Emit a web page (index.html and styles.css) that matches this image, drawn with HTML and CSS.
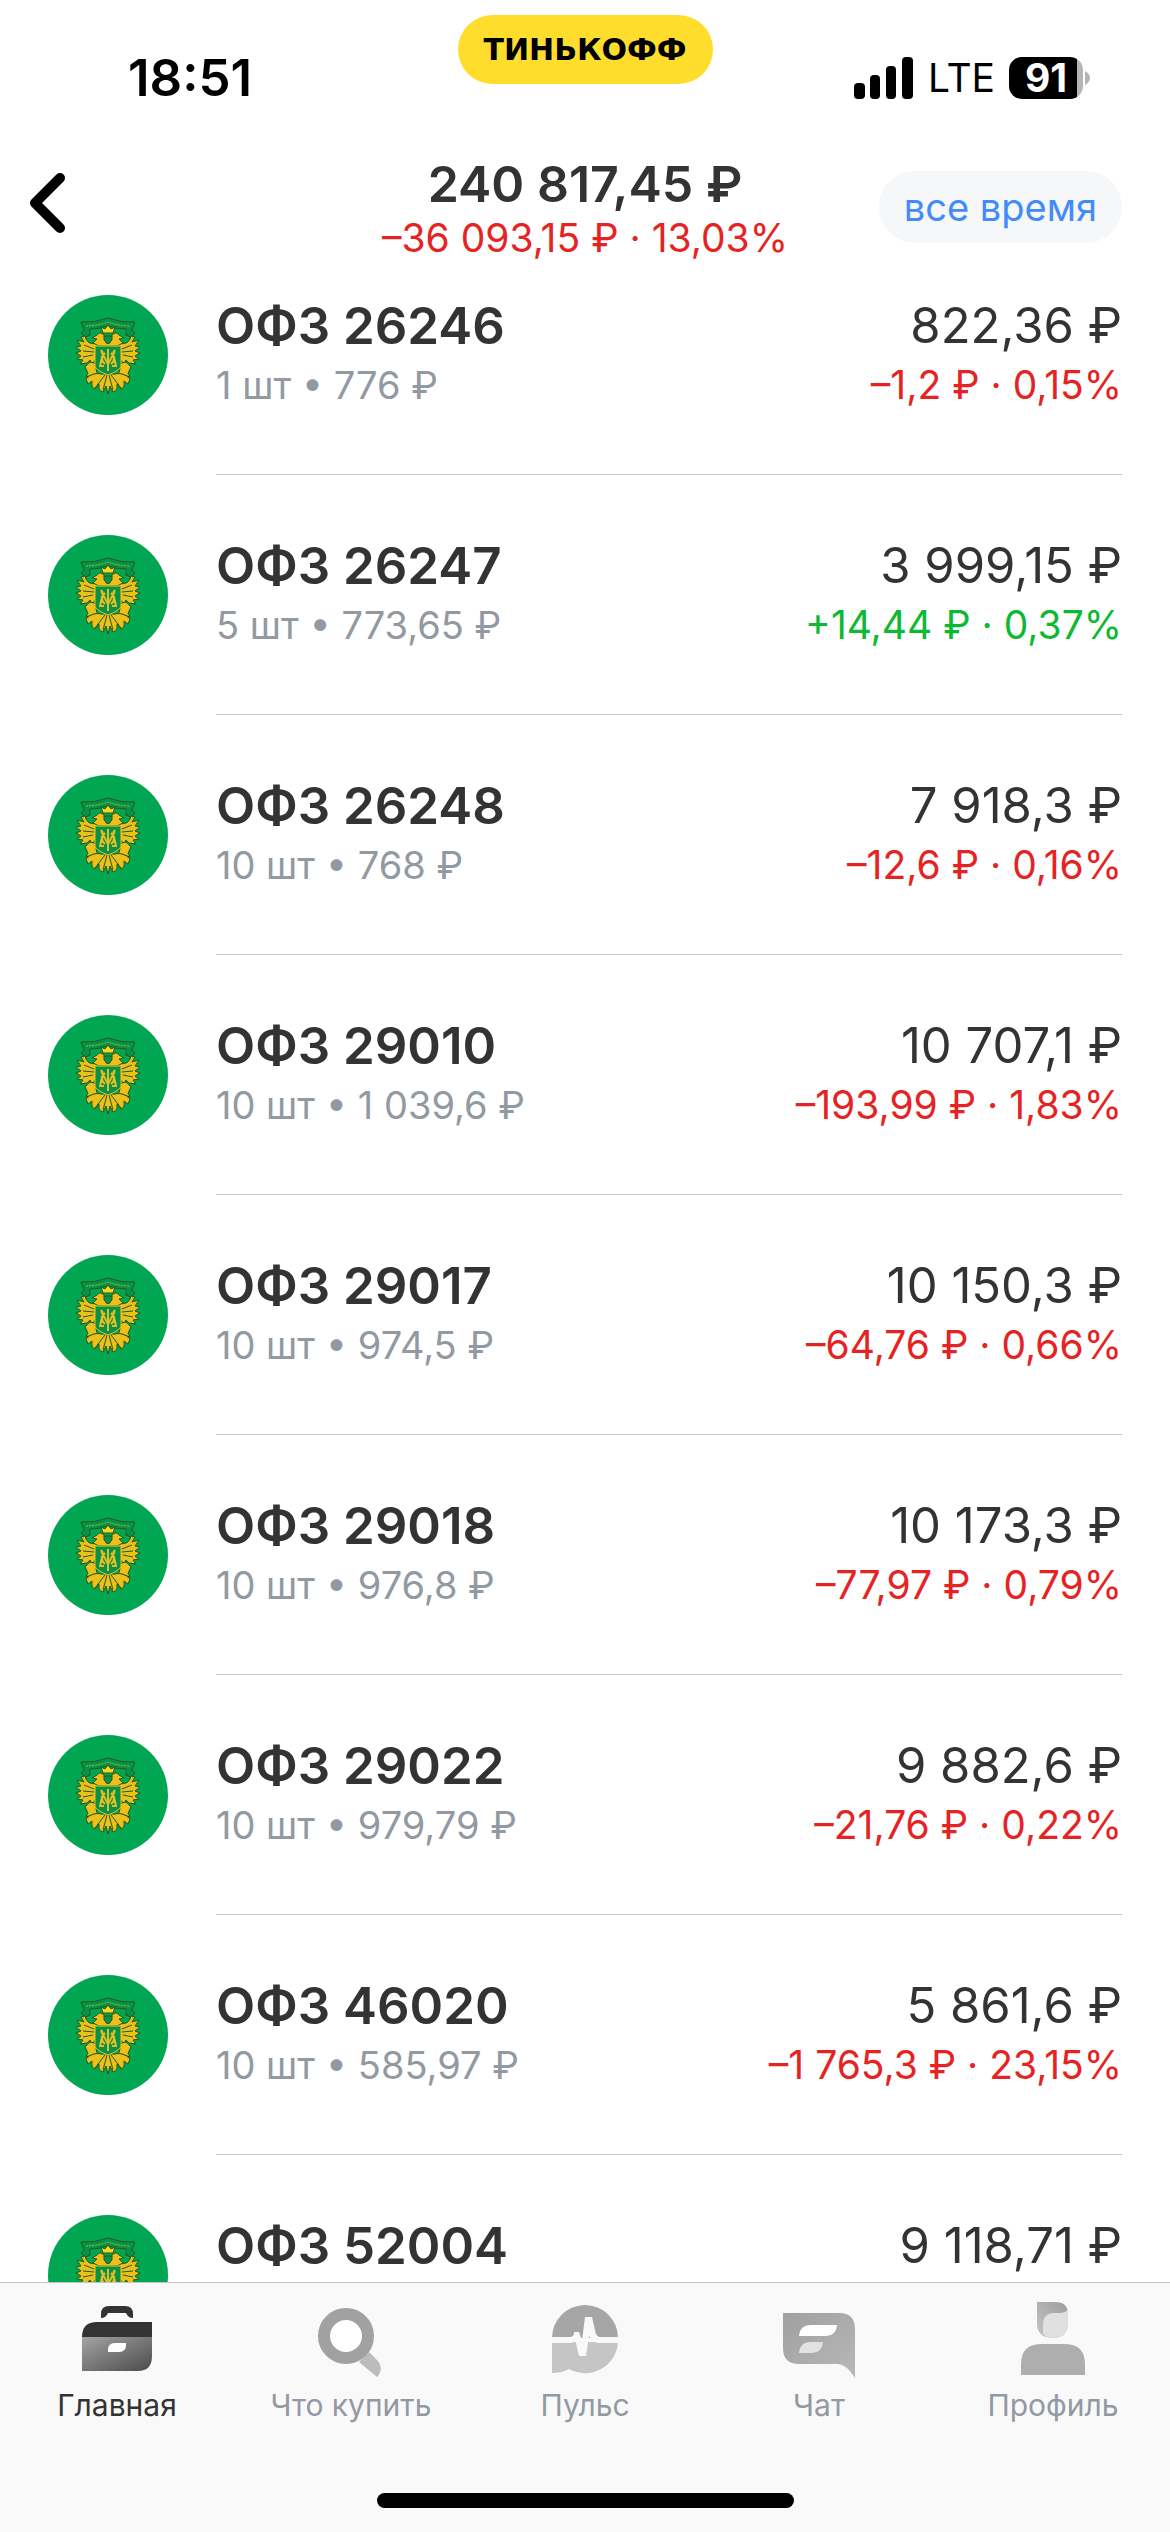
FILE: index.html
```html
<!DOCTYPE html>
<html lang="ru">
<head>
<meta charset="utf-8">
<meta name="viewport" content="width=device-width, initial-scale=1">
<title>Портфель</title>
<link rel="stylesheet" href="styles.css">
</head>
<body>
<svg class="defs" aria-hidden="true">
  <symbol id="emblem" viewBox="0 0 120 120">
    <circle cx="60" cy="60" r="60" fill="#00a651"/>
    <g stroke="#24571c" stroke-width="1" stroke-linejoin="round">
      <path d="M33 27Q47 28 60 23Q73 28 87 27L84 35L87 38L83 42L78 40V34Q69 34 60 31Q51 34 42 34V40L37 42L33 38L36 35Z" fill="#079247"/>
      <path d="M38 31Q49 31 60 27Q71 31 82 31" fill="none" stroke="#a3bd3a" stroke-dasharray="2 1"/>
      <g fill="#ecc01a">
        <path d="M50 48Q39 51 37 41L33 42L36 47L29 45L33 51L28 52L33 56L28 58L33 61L29 64L35 65L32 69L39 68L42 65L44 69L50 62Z"/>
        <path d="M70 48Q81 51 83 41L87 42L84 47L91 45L87 51L92 52L87 56L92 58L87 61L91 64L85 65L88 69L81 68L78 65L76 69L70 62Z"/>
        <path d="M42 67L37 72L40 78L38 82L46 79L50 81L48 74L50 69Z"/>
        <path d="M78 67L83 72L80 78L82 82L74 79L70 81L72 74L70 69Z"/>
        <path d="M54 79Q44 77 38 84L40 89L44 86Q43 93 47 94L51 89Q50 96 55 97L58 91L60 99L62 91L65 97Q70 96 69 89L73 94Q77 93 76 86L80 89L82 84Q76 77 66 79Z"/>
        <path d="M58 48L56 40Q52 36 49 40L44 43L49 44L45 48L51 51H69L75 48L71 44L76 43L71 40Q68 36 64 40L62 48Z"/>
        <path d="M55 38L53 32L57 34L60 30L63 34L67 32L65 38Z" fill="#ffd51c"/>
      </g>
      <path d="M57 80L47 93M59 80L55 95M61 80L65 95M63 80L73 93M36 50L46 54M35 56L46 57M35 62L45 60M84 50L74 54M85 56L74 57M85 62L75 60" fill="none"/>
      <path d="M56 41H64V45L60 49L56 45Z" fill="#079247"/>
    </g>
    <path d="M47 51H73V72Q70 76 60 80Q50 76 47 72Z" fill="#079247" stroke="#ecc01a" stroke-width="1"/>
    <path d="M53 55Q56 58 54 62L52 71M53 56L60 69L67 56M67 55Q64 58 66 62L68 71M60 54V76M57 58Q51 64 57 69M63 58Q69 64 63 69M51 71H56M64 71H69" fill="none" stroke="#e4bd22" stroke-width="2"/>
  </symbol>
</svg>

<div class="app">
  <header class="top">
    <div class="status">
      <div class="status-time">18:51</div>
      <div class="brand">ТИНЬКОФФ</div>
      <div class="status-icons">
        <svg class="signal" viewBox="0 0 60 44" aria-hidden="true">
          <rect x="0" y="27" width="11" height="16" rx="4"/><rect x="16" y="19" width="10" height="24" rx="4"/><rect x="32" y="10" width="10" height="33" rx="4"/><rect x="48" y="1" width="11" height="42" rx="4"/>
        </svg>
        <span class="network">LTE</span>
        <span class="battery"><span class="battery-level">91</span></span>
        <svg class="battery-tip" viewBox="0 0 5 14" aria-hidden="true"><path d="M0 0Q5 3 5 7T0 14Z"/></svg>
      </div>
    </div>
    <div class="summary">
      <button class="back" type="button" aria-label="Назад">
        <svg viewBox="0 0 36 60" aria-hidden="true"><path d="M30 5L5 30L30 55"/></svg>
      </button>
      <div class="totals">
        <h1 class="total">240 817,45 ₽</h1>
        <p class="detail down">–36 093,15 ₽ · 13,03%</p>
      </div>
      <button class="period" type="button">все время</button>
    </div>
  </header>

  <main class="list">
    <article class="row"><svg class="avatar" aria-hidden="true"><use href="#emblem"/></svg><div class="body"><div><h2 class="name">ОФЗ 26246</h2><p class="detail">1 шт • 776 ₽</p></div><div class="value"><p class="sum">822,36 ₽</p><p class="detail down">–1,2 ₽ · 0,15%</p></div></div></article>
    <article class="row"><svg class="avatar" aria-hidden="true"><use href="#emblem"/></svg><div class="body"><div><h2 class="name">ОФЗ 26247</h2><p class="detail">5 шт • 773,65 ₽</p></div><div class="value"><p class="sum">3 999,15 ₽</p><p class="detail up">+14,44 ₽ · 0,37%</p></div></div></article>
    <article class="row"><svg class="avatar" aria-hidden="true"><use href="#emblem"/></svg><div class="body"><div><h2 class="name">ОФЗ 26248</h2><p class="detail">10 шт • 768 ₽</p></div><div class="value"><p class="sum">7 918,3 ₽</p><p class="detail down">–12,6 ₽ · 0,16%</p></div></div></article>
    <article class="row"><svg class="avatar" aria-hidden="true"><use href="#emblem"/></svg><div class="body"><div><h2 class="name">ОФЗ 29010</h2><p class="detail">10 шт • 1 039,6 ₽</p></div><div class="value"><p class="sum">10 707,1 ₽</p><p class="detail down">–193,99 ₽ · 1,83%</p></div></div></article>
    <article class="row"><svg class="avatar" aria-hidden="true"><use href="#emblem"/></svg><div class="body"><div><h2 class="name">ОФЗ 29017</h2><p class="detail">10 шт • 974,5 ₽</p></div><div class="value"><p class="sum">10 150,3 ₽</p><p class="detail down">–64,76 ₽ · 0,66%</p></div></div></article>
    <article class="row"><svg class="avatar" aria-hidden="true"><use href="#emblem"/></svg><div class="body"><div><h2 class="name">ОФЗ 29018</h2><p class="detail">10 шт • 976,8 ₽</p></div><div class="value"><p class="sum">10 173,3 ₽</p><p class="detail down">–77,97 ₽ · 0,79%</p></div></div></article>
    <article class="row"><svg class="avatar" aria-hidden="true"><use href="#emblem"/></svg><div class="body"><div><h2 class="name">ОФЗ 29022</h2><p class="detail">10 шт • 979,79 ₽</p></div><div class="value"><p class="sum">9 882,6 ₽</p><p class="detail down">–21,76 ₽ · 0,22%</p></div></div></article>
    <article class="row"><svg class="avatar" aria-hidden="true"><use href="#emblem"/></svg><div class="body"><div><h2 class="name">ОФЗ 46020</h2><p class="detail">10 шт • 585,97 ₽</p></div><div class="value"><p class="sum">5 861,6 ₽</p><p class="detail down">–1 765,3 ₽ · 23,15%</p></div></div></article>
    <article class="row"><svg class="avatar" aria-hidden="true"><use href="#emblem"/></svg><div class="body"><div><h2 class="name">ОФЗ 52004</h2></div><div class="value"><p class="sum">9 118,71 ₽</p></div></div></article>
  </main>

  <nav class="tabs">
    <div class="tab-row">
      <a class="tab active" href="#home">
        <svg viewBox="0 0 84 84" aria-hidden="true">
          <defs><linearGradient id="g1" x1="0" y1="0" x2="1" y2="1"><stop offset="0" stop-color="#a3a3a3"/><stop offset="1" stop-color="#4b4b4b"/></linearGradient></defs>
          <path d="M26 22V18Q26 10 34 10H50Q58 10 58 18V22Q53 22 51 17H33Q31 22 26 22Z" fill="#333"/>
          <path d="M7 41Q7 26 22 26H77V41Z" fill="#333"/>
          <path d="M7 41H77V60Q77 75 63 75H7Z" fill="url(#g1)"/>
          <path d="M33 56V54Q33 47 40 47H51V49Q51 56 44 56Z" fill="#fff"/>
        </svg>
        <span>Главная</span>
      </a>
      <a class="tab" href="#buy">
        <svg viewBox="0 0 84 84" aria-hidden="true">
          <path d="M50 66L60 56L67 63Q76 72 68 81Z" fill="#bcbcbc"/>
          <circle cx="37" cy="40" r="22" fill="#fff" stroke="#a1a1a1" stroke-width="12"/>
        </svg>
        <span>Что купить</span>
      </a>
      <a class="tab" href="#pulse">
        <svg viewBox="0 0 84 84" aria-hidden="true">
          <path d="M9 42A33 33 0 0 1 75 42Z" fill="#a6a6a6"/>
          <path d="M9 46H75A33 33 0 0 1 26 73Q19 77 9 77Z" fill="#c5c5c5"/>
          <path d="M8 41H28Q30 41 31 38V36H36L39 45L42 21H49L52 34Q53 41 57 41H76V47H56Q49 47 46 40L43 60H36L32 43Q31 47 28 47H8Z" fill="#f9f9f9"/>
        </svg>
        <span>Пульс</span>
      </a>
      <a class="tab" href="#chat">
        <svg viewBox="0 0 84 84" aria-hidden="true">
          <defs><linearGradient id="g2" x1="0" y1="0" x2="1" y2="1"><stop offset="0" stop-color="#a0a0a0"/><stop offset="1" stop-color="#b8b8b8"/></linearGradient></defs>
          <path d="M6 17H62Q78 17 78 33V82Q69 68 61 68H22Q6 68 6 52Z" fill="url(#g2)"/>
          <path d="M22 40Q23 29 34 29H60Q59 40 48 40Z" fill="#fff"/>
          <path d="M22 57Q23 46 34 46H46Q45 57 35 57Z" fill="#e2e2e2"/>
        </svg>
        <span>Чат</span>
      </a>
      <a class="tab" href="#profile">
        <svg viewBox="0 0 84 84" aria-hidden="true">
          <defs><linearGradient id="g3" x1="0" y1="1" x2="1" y2="0"><stop offset="0" stop-color="#c5c5c5"/><stop offset="1" stop-color="#9c9c9c"/></linearGradient></defs>
          <path d="M26 6H44Q57 6 57 18V26Q57 42 42 42Q26 42 26 27Z" fill="url(#g3)"/>
          <path d="M32 38V29Q32 17 43 17H48Q55 17 57 13V27Q57 42 42 42Q36 42 32 38Z" fill="#e0e0e0"/>
          <path d="M10 79V68Q10 48 31 48H53Q74 48 74 68V79Z" fill="#aeaeae"/>
        </svg>
        <span>Профиль</span>
      </a>
    </div>
    <div class="home-bar"></div>
  </nav>
</div>
</body>
</html>
```
FILE: styles.css
```css
* { box-sizing: border-box; }
body, h1, h2, p { margin: 0; }
body { background: #fff; color: #333; font-family: Inter, "Liberation Sans", sans-serif; }
button { border: 0; padding: 0; background: none; font: inherit; }
.defs { position: absolute; width: 0; height: 0; }
.app { display: flex; flex-direction: column; height: 100vh; }

.status { display: grid; grid-template-columns: 1fr auto 1fr; align-items: start; padding: 15px 80px 0; height: 154px; color: #000; }
.status-time { padding: 33px 0 0 48px; font-size: 51px; line-height: 60px; font-weight: 600; }
.brand { min-width: 255px; height: 69px; border-radius: 35px; background: #ffdd2d; font-family: "DejaVu Sans", sans-serif; font-size: 30px; line-height: 69px; font-weight: 700; text-align: center; }
.status-icons { display: flex; align-items: center; justify-content: flex-end; padding-top: 41px; height: 84px; }
.signal { width: 60px; height: 44px; }
.network { margin: 0 14px; font-size: 39px; line-height: 44px; }
.battery { display: block; width: 74px; height: 42px; border-radius: 13px; background: linear-gradient(90deg, #000 68px, #b5b5b5 68px); }
.battery-level { display: block; color: #fff; font-size: 39px; line-height: 42px; font-weight: 700; text-align: center; }
.battery-tip { width: 5px; height: 14px; margin-left: 2px; fill: #b5b5b5; }

.summary { display: grid; grid-template-columns: 1fr auto 1fr; align-items: start; padding: 0 48px; height: 111px; }
.back { justify-self: start; width: 36px; height: 60px; margin: 19px 0 0 -18px; }
.back svg { display: block; fill: none; stroke: #000; stroke-width: 10; stroke-linecap: round; stroke-linejoin: round; }
.totals { text-align: center; }
.total, .name, .sum { font-size: 50px; line-height: 60px; font-weight: 600; white-space: nowrap; }
.sum { font-weight: 400; }
.name { font-size: 51px; }
.sum { font-size: 49px; }
.detail { font-size: 38px; line-height: 48px; color: #9299a2; white-space: nowrap; }
.down, .up { font-size: 39px; }
.down { color: #e62323; }
.up { color: #0db932; }
.period { justify-self: end; height: 72px; margin-top: 17px; padding: 0 25px; border-radius: 36px; background: #f5f7f8; color: #428bf9; font-size: 38px; }

.list { flex: 1; min-height: 0; overflow: hidden; padding-top: 30px; }
.row { display: grid; grid-template-columns: 120px 1fr; column-gap: 48px; padding: 0 48px; margin-bottom: 60px; }
.avatar { width: 120px; height: 120px; }
.body { display: flex; justify-content: space-between; height: 180px; padding-top: 1px; border-bottom: 1px solid #c7c7c9; }
.body .detail { padding-top: 5px; }
.value { text-align: right; }

.tabs { flex: none; display: flex; flex-direction: column; justify-content: space-between; height: 250px; padding-bottom: 24px; border-top: 1px solid #c4c4c6; background: #f9f9f9; }
.tab-row { display: grid; grid-template-columns: repeat(5, 1fr); padding-top: 13px; }
.tab { display: flex; flex-direction: column; align-items: center; gap: 7px; color: #9299a2; font-size: 30px; line-height: 36px; text-decoration: none; white-space: nowrap; }
.tab svg { width: 84px; height: 84px; }
.active { color: #333; }
.home-bar { align-self: center; width: 417px; height: 15px; border-radius: 8px; background: #000; }
```
